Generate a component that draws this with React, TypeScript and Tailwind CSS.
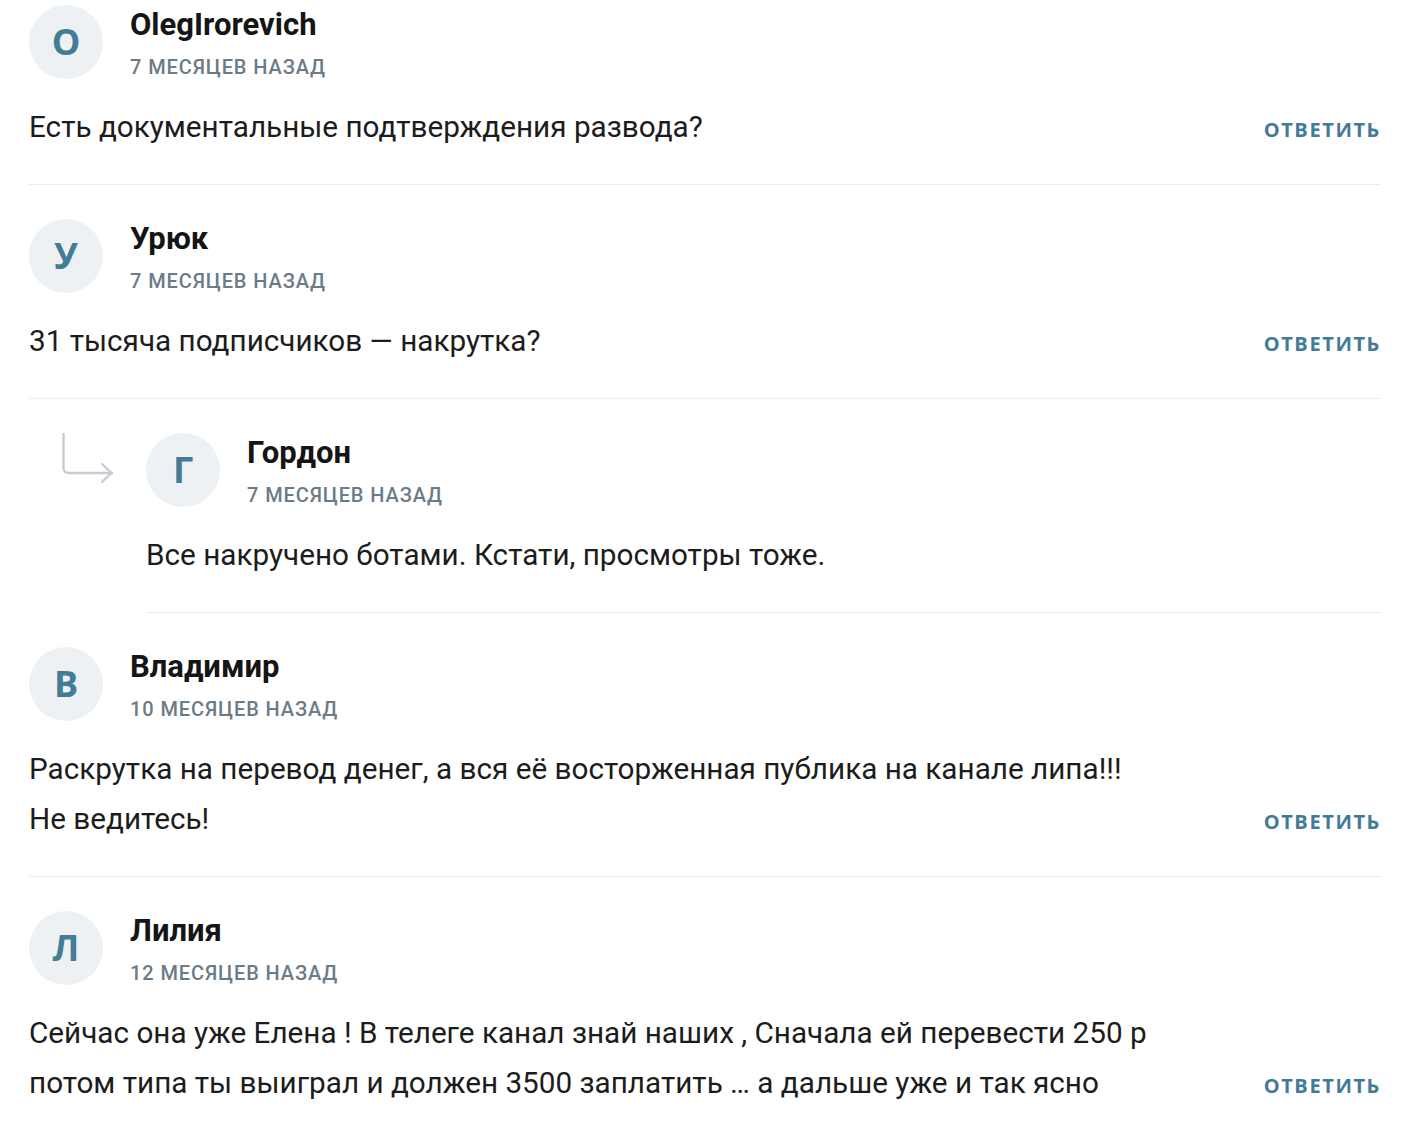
type Comment = {
  id: number;
  author: string;
  date: string;
  text: string;
  isReply?: boolean;
};

const comments: Comment[] = [
  {
    id: 1,
    author: "OlegIrorevich",
    date: "7 месяцев назад",
    text: "Есть документальные подтверждения развода?",
  },
  {
    id: 2,
    author: "Урюк",
    date: "7 месяцев назад",
    text: "31 тысяча подписчиков — накрутка?",
  },
  {
    id: 3,
    author: "Гордон",
    date: "7 месяцев назад",
    text: "Все накручено ботами. Кстати, просмотры тоже.",
    isReply: true,
  },
  {
    id: 4,
    author: "Владимир",
    date: "10 месяцев назад",
    text: "Раскрутка на перевод денег, а вся её восторженная публика на канале липа!!!\nНе ведитесь!",
  },
  {
    id: 5,
    author: "Лилия",
    date: "12 месяцев назад",
    text: "Сейчас она уже Елена ! В телеге канал знай наших , Сначала ей перевести 250 р\nпотом типа ты выиграл и должен 3500 заплатить … а дальше уже и так ясно",
  },
];

function ReplyArrow() {
  return (
    <svg width="54" height="52" viewBox="0 0 54 52" fill="none" stroke="#c6ccd1" strokeWidth="2.4" strokeLinecap="round" strokeLinejoin="round">
      <path d="M2.5 1v34a5 5 0 0 0 5 5h43.5" />
      <path d="M41 31l9.5 9-9.5 9" />
    </svg>
  );
}

function CommentBody({ c, first }: { c: Comment; first: boolean }) {
  return (
    <div className={`flex-1 border-b border-[#ececec] pb-[32px] ${first ? "pt-[5px]" : "pt-[34px]"}`}>
      <div className="flex items-start gap-[27px]">
        <div className="w-[74px] h-[74px] shrink-0 rounded-full bg-[#edf1f4] flex items-center justify-center text-[36px] font-bold text-[#437c96] font-['Open_Sans',sans-serif]">
          {c.author[0]}
        </div>
        <div>
          <div className="text-[31px] leading-[40px] font-bold text-[#151515]">{c.author}</div>
          <div className="mt-[11px] text-[20px] leading-[23px] font-medium uppercase tracking-[0.9px] text-[#6b7b88]">
            {c.date}
          </div>
        </div>
      </div>
      <div className="mt-[23px] flex items-end justify-between gap-10">
        <p className="text-[29.7px] leading-[50px] text-[#1c1c1c] whitespace-pre-line">{c.text}</p>
        {!c.isReply && (
          <button className="shrink-0 mb-[-3px] text-[20px] leading-[50px] font-bold uppercase tracking-[1.6px] text-[#417b95] font-['Open_Sans',sans-serif]">
            Ответить
          </button>
        )}
      </div>
    </div>
  );
}

export default function App() {
  return (
    <div className="min-h-screen bg-white pl-[29px] pr-[36px] font-['Roboto','Noto_Sans',sans-serif]">
      {comments.map((c, i) =>
        c.isReply ? (
          <div key={c.id} className="flex">
            <div className="w-[117px] shrink-0 pt-[34px] pl-[32px]">
              <ReplyArrow />
            </div>
            <CommentBody c={c} first={false} />
          </div>
        ) : (
          <div key={c.id} className="flex">
            <CommentBody c={c} first={i === 0} />
          </div>
        )
      )}
    </div>
  );
}
